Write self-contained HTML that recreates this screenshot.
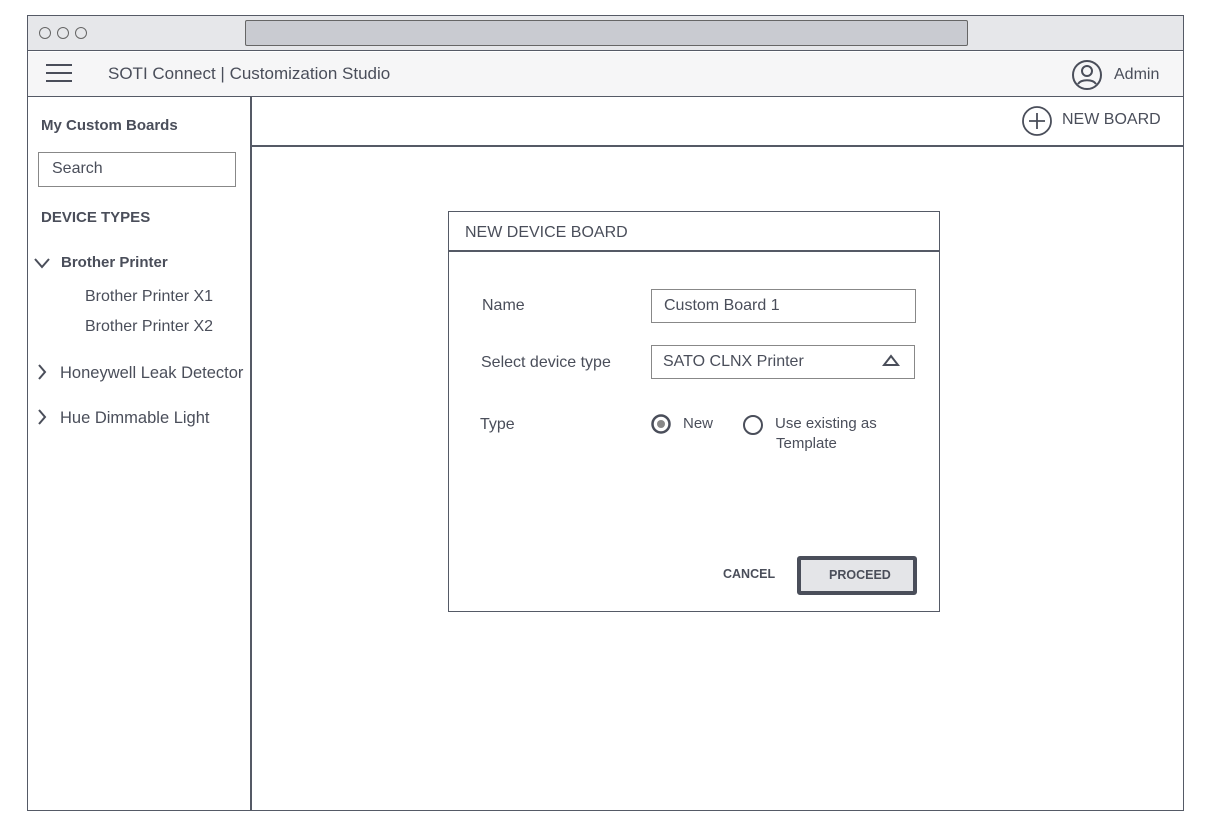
<!DOCTYPE html>
<html><head><style>
*{box-sizing:border-box;margin:0;padding:0}
body{width:1214px;height:836px;background:#fff;position:relative;font-family:"Liberation Sans",sans-serif;color:#4a4e5a;overflow:hidden}
.a{position:absolute}
.t{position:absolute;white-space:nowrap;font-size:16px}
</style></head><body>
<div class="a" style="left:27px;top:15px;width:1157px;height:796px;border:1.5px solid #555a66"></div>
<div class="a" style="left:28px;top:16px;width:1155px;height:35px;background:#e6e7ea;border-bottom:1.5px solid #555a66"></div>
<div class="a" style="left:39px;top:27px;width:12px;height:12px;border:1.5px solid #666;border-radius:50%"></div>
<div class="a" style="left:57px;top:27px;width:12px;height:12px;border:1.5px solid #666;border-radius:50%"></div>
<div class="a" style="left:75px;top:27px;width:12px;height:12px;border:1.5px solid #666;border-radius:50%"></div>
<div class="a" style="left:245px;top:20px;width:723px;height:26px;background:#c9cbd1;border:1.5px solid #666;border-radius:2px"></div>
<div class="a" style="left:28px;top:52px;width:1155px;height:45px;background:#f6f6f7;border-bottom:1.5px solid #555a66"></div>
<div class="a" style="left:46px;top:64px;width:26px;height:2px;background:#4a4e5a"></div>
<div class="a" style="left:46px;top:72px;width:26px;height:2px;background:#4a4e5a"></div>
<div class="a" style="left:46px;top:80px;width:26px;height:2px;background:#4a4e5a"></div>
<div class="t" style="left:108px;top:64px;font-size:17px">SOTI Connect | Customization Studio</div>
<svg class="a" style="left:1071px;top:59px" width="32" height="32" viewBox="0 0 32 32" fill="none" stroke="#4a4e5a" stroke-width="2"><circle cx="16" cy="16" r="14"/><circle cx="16" cy="12" r="5"/><path d="M7 25c3-5 15-5 18 0"/></svg>
<div class="t" style="left:1114px;top:66px;font-size:16px">Admin</div>
<div class="a" style="left:250px;top:97px;width:1.5px;height:714px;background:#555a66"></div>
<div class="a" style="left:251px;top:145px;width:933px;height:1.5px;background:#555a66"></div>
<svg class="a" style="left:1021px;top:105px" width="32" height="32" viewBox="0 0 32 32" fill="none" stroke="#4a4e5a" stroke-width="1.8"><circle cx="16" cy="16" r="14"/><path d="M16 8v16M8 16h16"/></svg>
<div class="t" style="left:1062px;top:111px;font-size:16px">NEW BOARD</div>
<div class="t" style="left:41px;top:117px;font-weight:bold;font-size:15px">My Custom Boards</div>
<div class="a" style="left:38px;top:152px;width:198px;height:35px;border:1.5px solid #888"></div>
<div class="t" style="left:52px;top:160px">Search</div>
<div class="t" style="left:41px;top:209px;font-weight:bold;font-size:15px">DEVICE TYPES</div>
<svg class="a" style="left:33px;top:256px" width="18" height="14"><path d="M2 3l7 8 7-8" stroke="#4a4e5a" stroke-width="2" fill="none"/></svg>
<div class="t" style="left:61px;top:254px;font-weight:bold;font-size:15px">Brother Printer</div>
<div class="t" style="left:85px;top:288px">Brother Printer X1</div>
<div class="t" style="left:85px;top:318px">Brother Printer X2</div>
<svg class="a" style="left:36px;top:363px" width="12" height="18"><path d="M3 2l6 7-6 7" stroke="#4a4e5a" stroke-width="2" fill="none"/></svg>
<div class="t" style="left:60px;top:364px;font-size:16.5px">Honeywell Leak Detector</div>
<svg class="a" style="left:36px;top:408px" width="12" height="18"><path d="M3 2l6 7-6 7" stroke="#4a4e5a" stroke-width="2" fill="none"/></svg>
<div class="t" style="left:60px;top:409px;font-size:16.5px">Hue Dimmable Light</div>
<div class="a" style="left:448px;top:211px;width:492px;height:401px;border:1.5px solid #555a66"></div>
<div class="a" style="left:448px;top:250px;width:492px;height:1.5px;background:#555a66"></div>
<div class="t" style="left:465px;top:224px">NEW DEVICE BOARD</div>
<div class="t" style="left:482px;top:297px">Name</div>
<div class="a" style="left:651px;top:289px;width:265px;height:34px;border:1.5px solid #888"></div>
<div class="t" style="left:664px;top:297px">Custom Board 1</div>
<div class="t" style="left:481px;top:354px">Select device type</div>
<div class="a" style="left:651px;top:345px;width:264px;height:34px;border:1.5px solid #888"></div>
<div class="t" style="left:663px;top:353px">SATO CLNX Printer</div>
<svg class="a" style="left:882px;top:354px" width="18" height="14"><path d="M9 2L2 11h14z" stroke="#4a4e5a" stroke-width="2" fill="none"/></svg>
<div class="t" style="left:480px;top:416px">Type</div>
<svg class="a" style="left:650px;top:413px" width="22" height="22"><circle cx="11" cy="11" r="8.5" stroke="#4a4e5a" stroke-width="2.5" fill="#fff"/><circle cx="11" cy="11" r="4" fill="#888"/></svg>
<div class="t" style="left:683px;top:415px;font-size:15px">New</div>
<svg class="a" style="left:742px;top:414px" width="22" height="22"><circle cx="11" cy="11" r="9" stroke="#4a4e5a" stroke-width="2" fill="none"/></svg>
<div class="t" style="left:775px;top:415px;font-size:15px">Use existing as</div>
<div class="t" style="left:776px;top:435px;font-size:15px">Template</div>
<div class="t" style="left:723px;top:567px;font-size:12.5px;font-weight:bold">CANCEL</div>
<div class="a" style="left:797px;top:556px;width:120px;height:39px;border:4px solid #4a4e5a;border-radius:3px;background:#e4e5e8"></div>
<div class="t" style="left:829px;top:568px;font-size:12.5px;font-weight:bold">PROCEED</div>
</body></html>
